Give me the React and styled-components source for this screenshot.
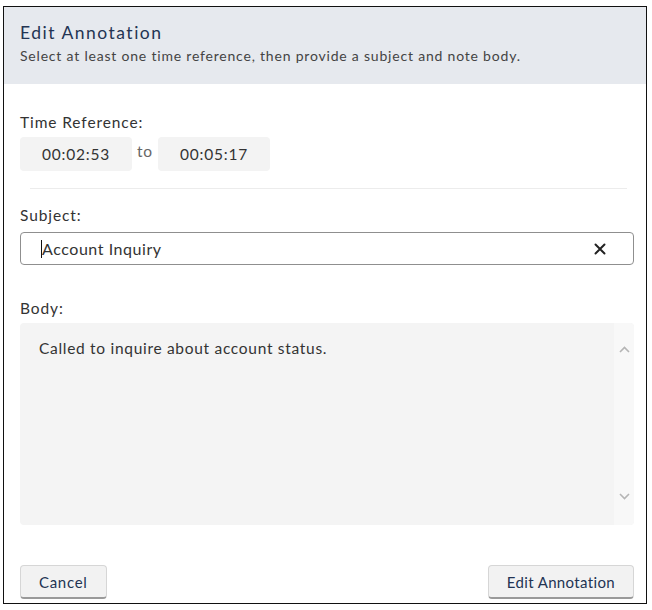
import React, { useState } from 'react';
import styled, { createGlobalStyle } from 'styled-components';

const GlobalStyle = createGlobalStyle`
  body {
    margin: 0;
    background: #fff;
    font-family: Lato, "Open Sans", sans-serif;
  }
`;

const Dialog = styled.div`
  margin: 6px 0 0 3px;
  width: 644px;
  height: 598px;
  box-sizing: border-box;
  border: 1px solid #111;
  display: flex;
  flex-direction: column;
  background: #fff;
`;

const Header = styled.div`
  background: #e6e9ee;
  height: 77px;
  box-sizing: border-box;
  padding: 15px 16px 0 16px;
`;

const Title = styled.h2`
  margin: 0;
  font-size: 17.5px;
  font-weight: 400;
  line-height: 22px;
  letter-spacing: 1.5px;
  color: #233453;
`;

const Subtitle = styled.p`
  margin: 3px 0 0;
  font-size: 14px;
  line-height: 18px;
  letter-spacing: 0.8px;
  color: #444;
`;

const Body = styled.div`
  flex: 1;
  display: flex;
  flex-direction: column;
  padding: 29px 12px 0 16px;
`;

const Label = styled.label`
  display: block;
  font-size: 15.5px;
  line-height: 18px;
  letter-spacing: 0.9px;
  color: #333;
  margin-top: ${(p) => p.$top || 0}px;
`;

const TimeRow = styled.div`
  display: flex;
  align-items: center;
  gap: 5px;
  margin-top: 6px;
`;

const TimeBox = styled.div`
  width: 112px;
  height: 34px;
  border-radius: 4px;
  background: #f3f3f3;
  display: flex;
  align-items: center;
  justify-content: center;
  font-size: 15.5px;
  letter-spacing: 0.8px;
  color: #333;
`;

const To = styled.span`
  font-size: 15.5px;
  letter-spacing: 0.8px;
  color: #666;
  margin: -6px 0 0;
`;

const Divider = styled.hr`
  border: 0;
  border-top: 1px solid #ececec;
  margin: 17px 7px 0 10px;
`;

const InputWrap = styled.div`
  position: relative;
  margin-top: 8px;
  height: 33px;
  box-sizing: border-box;
  border: 1px solid #8f8f8f;
  border-radius: 4px;
  display: flex;
  align-items: center;
`;

const Caret = styled.span`
  position: absolute;
  left: 20px;
  top: 7px;
  width: 1px;
  height: 18px;
  background: #111;
`;

const TextInput = styled.input`
  flex: 1;
  border: 0;
  outline: none;
  background: transparent;
  font-family: inherit;
  font-size: 16px;
  letter-spacing: 0.55px;
  color: #333;
  padding: 0 0 0 21px;
`;

const ClearButton = styled.button`
  border: 0;
  background: transparent;
  width: 24px;
  height: 24px;
  padding: 0;
  margin-right: 21px;
  display: flex;
  align-items: center;
  justify-content: center;
  cursor: pointer;
`;

const TextAreaBox = styled.div`
  margin-top: 6px;
  height: 202px;
  border-radius: 4px;
  background: #f4f4f4;
  display: flex;
  overflow: hidden;
`;

const TextArea = styled.textarea`
  flex: 1;
  border: 0;
  outline: none;
  resize: none;
  background: transparent;
  font-family: inherit;
  font-size: 15.5px;
  line-height: 20px;
  letter-spacing: 0.7px;
  color: #333;
  padding: 15px 19px;
`;

const ScrollTrack = styled.div`
  width: 20px;
  background: #f8f8f8;
  display: flex;
  flex-direction: column;
  align-items: center;
  justify-content: space-between;
  padding: 23px 0 25px;
`;

const Footer = styled.div`
  display: flex;
  justify-content: space-between;
  margin-top: 40px;
`;

const Button = styled.button`
  height: 34px;
  padding: 0 18px;
  border: 1px solid #d6d6d6;
  border-bottom: 2px solid #9a9a9a;
  border-radius: 4px;
  background: #f2f2f2;
  font-family: inherit;
  font-size: 15px;
  letter-spacing: ${(p) => p.$spacing}px;
  color: #233453;
  cursor: pointer;
`;

const Chevron = ({ up }) => (
  <svg width="11" height="7" viewBox="0 0 11 7">
    <path
      d={up ? 'M1 6 L5.5 1.5 L10 6' : 'M1 1 L5.5 5.5 L10 1'}
      fill="none"
      stroke="#b5b5b5"
      strokeWidth="1.6"
    />
  </svg>
);

const App = () => {
  const [subject, setSubject] = useState('Account Inquiry');
  const [body, setBody] = useState('Called to inquire about account status.');

  return (
    <>
      <GlobalStyle />
      <Dialog>
        <Header>
          <Title>Edit Annotation</Title>
          <Subtitle>Select at least one time reference, then provide a subject and note body.</Subtitle>
        </Header>
        <Body>
          <Label>Time Reference:</Label>
          <TimeRow>
            <TimeBox>00:02:53</TimeBox>
            <To>to</To>
            <TimeBox>00:05:17</TimeBox>
          </TimeRow>
          <Divider />
          <Label $top={17}>Subject:</Label>
          <InputWrap>
            <Caret />
            <TextInput value={subject} onChange={(e) => setSubject(e.target.value)} />
            <ClearButton onClick={() => setSubject('')} aria-label="Clear">
              <svg width="12" height="12" viewBox="0 0 12 12">
                <path d="M1.5 1.5 L10.5 10.5 M10.5 1.5 L1.5 10.5" stroke="#222" strokeWidth="2" strokeLinecap="round" />
              </svg>
            </ClearButton>
          </InputWrap>
          <Label $top={34}>Body:</Label>
          <TextAreaBox>
            <TextArea value={body} onChange={(e) => setBody(e.target.value)} />
            <ScrollTrack>
              <Chevron up />
              <Chevron />
            </ScrollTrack>
          </TextAreaBox>
          <Footer>
            <Button $spacing={0.7}>Cancel</Button>
            <Button $spacing={0.35}>Edit Annotation</Button>
          </Footer>
        </Body>
      </Dialog>
    </>
  );
};

export default App;
